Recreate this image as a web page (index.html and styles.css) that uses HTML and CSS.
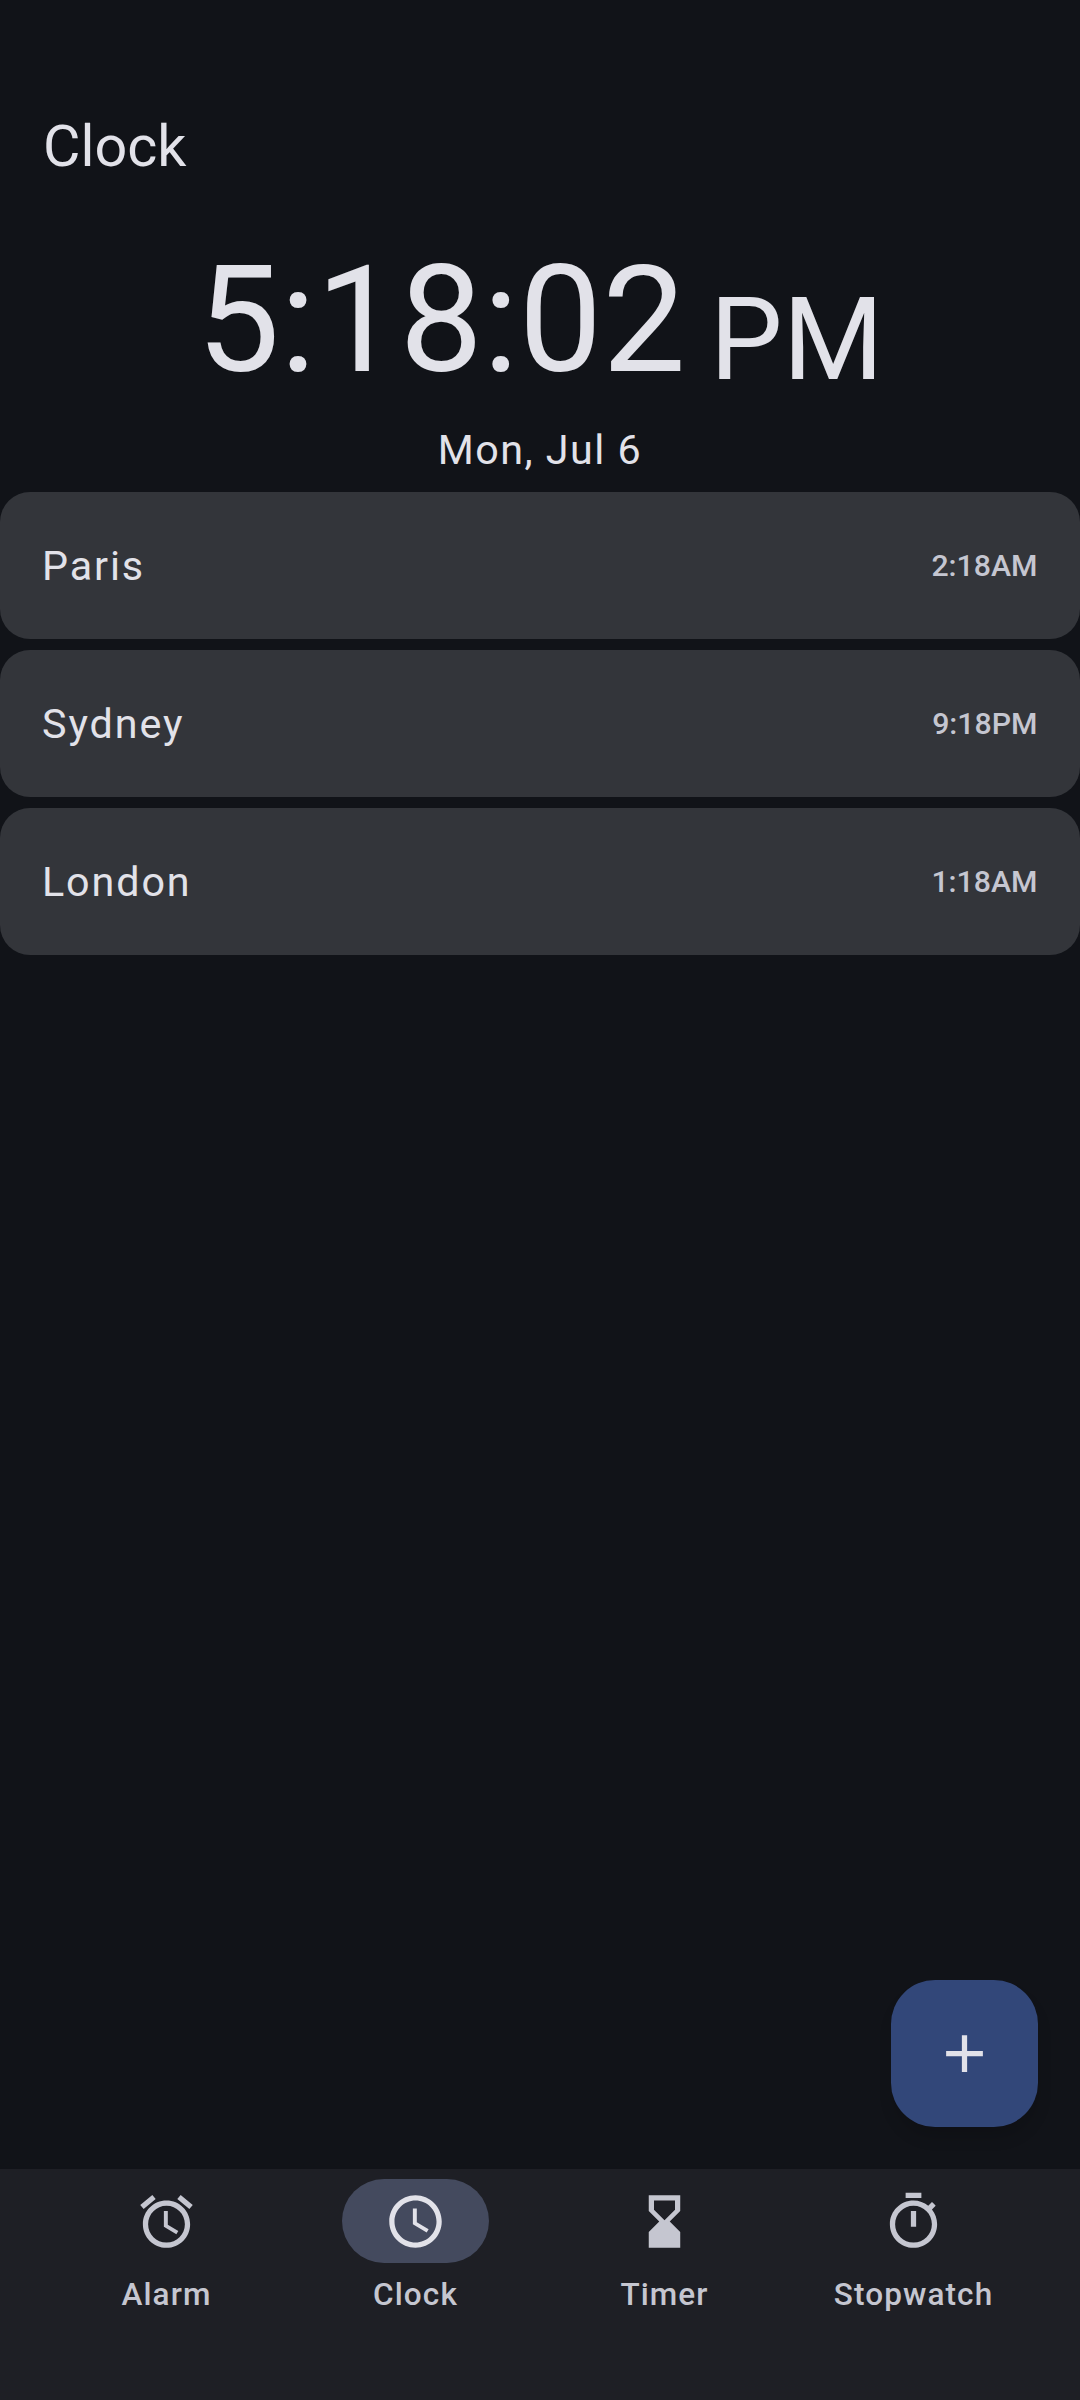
FILE: index.html
```html
<!DOCTYPE html>
<html lang="en">
<head>
<meta charset="utf-8">
<title>Clock</title>
<link rel="stylesheet" href="styles.css">
</head>
<body>
<div class="app">
  <main class="content">
    <h1 class="title">Clock</h1>
    <div class="now">
      <span class="now-time">5:18:02</span>
      <span class="now-ampm">PM</span>
    </div>
    <div class="date">Mon, Jul 6</div>
    <ul class="cities">
      <li class="city"><span class="city-name">Paris</span><span class="city-time">2:18AM</span></li>
      <li class="city"><span class="city-name">Sydney</span><span class="city-time">9:18PM</span></li>
      <li class="city"><span class="city-name">London</span><span class="city-time">1:18AM</span></li>
    </ul>
    <button class="fab" aria-label="Add">
      <svg class="icon" viewBox="0 0 24 24"><path d="M19 13h-6v6h-2v-6H5v-2h6V5h2v6h6v2z"/></svg>
    </button>
  </main>
  <nav class="nav">
    <div class="tab">
      <div class="pill"><svg class="icon" viewBox="0 0 24 24"><path d="M22 5.72l-4.6-3.86-1.29 1.53 4.6 3.86L22 5.72zM7.88 3.39L6.6 1.86 2 5.71l1.29 1.53 4.59-3.85zM12.5 8H11v6l4.75 2.85.75-1.23-4-2.37V8zM12 4c-4.97 0-9 4.03-9 9s4.03 9 9 9 9-4.03 9-9-4.03-9-9-9zm0 16c-3.87 0-7-3.13-7-7s3.13-7 7-7 7 3.13 7 7-3.13 7-7 7z"/></svg></div>
      <span class="tab-label">Alarm</span>
    </div>
    <div class="tab tab-active">
      <div class="pill"><svg class="icon" viewBox="0 0 24 24"><path d="M11.99 2C6.47 2 2 6.48 2 12s4.47 10 9.99 10C17.52 22 22 17.52 22 12S17.52 2 11.99 2zM12 20c-4.42 0-8-3.58-8-8s3.58-8 8-8 8 3.58 8 8-3.58 8-8 8zm.5-13H11v6l5.25 3.15.75-1.23-4.5-2.67z"/></svg></div>
      <span class="tab-label">Clock</span>
    </div>
    <div class="tab">
      <div class="pill"><svg class="icon" viewBox="0 0 24 24"><path d="M18 22l-.01-6L14 12l3.99-4.01L18 2H6v6l4 4-4 3.99V22h12zM8 7.5V4h8v3.5l-4 4-4-4z"/></svg></div>
      <span class="tab-label">Timer</span>
    </div>
    <div class="tab">
      <div class="pill"><svg class="icon" viewBox="0 0 24 24"><path d="M15 1H9v2h6V1zm-4 13h2V8h-2v6zm8.03-6.61l1.42-1.42c-.43-.51-.9-.99-1.41-1.41l-1.42 1.42C16.07 4.74 14.12 4 12 4c-4.97 0-9 4.03-9 9s4.02 9 9 9 9-4.03 9-9c0-2.12-.74-4.07-1.97-5.61zM12 20c-3.87 0-7-3.13-7-7s3.13-7 7-7 7 3.13 7 7-3.13 7-7 7z"/></svg></div>
      <span class="tab-label">Stopwatch</span>
    </div>
  </nav>
</div>
</body>
</html>
```

FILE: styles.css
```css
* { box-sizing: border-box; }
html, body { margin: 0; padding: 0; }
body {
  background: #111318;
  font-family: Roboto, "Liberation Sans", sans-serif;
  color: #e2e2e9;
}
.app {
  width: 1080px;
  height: 2400px;
  display: flex;
  flex-direction: column;
  overflow: hidden;
}
.content {
  position: relative;
  flex: 1;
  display: flex;
  flex-direction: column;
  padding-top: 111px;
}
.title {
  margin: 0;
  padding-left: 43px;
  font-size: 57.5px;
  line-height: 72px;
  font-weight: 400;
}
.now {
  margin-top: 48px;
  display: flex;
  justify-content: center;
  align-items: baseline;
  gap: 24px;
  height: 178px;
  line-height: 178px;
}
.now-time { font-size: 148.5px; font-weight: 400; }
.now-ampm { font-size: 115.5px; font-weight: 400; position: relative; top: 8px; }
.date {
  text-align: center;
  font-size: 41.25px;
  line-height: 56px;
  letter-spacing: 1.5px;
  margin-top: 13px;
}
.cities {
  list-style: none;
  margin: 14px 0 0;
  padding: 0;
  display: flex;
  flex-direction: column;
  gap: 11px;
}
.city {
  height: 147px;
  border-radius: 30px;
  background: #33353a;
  padding: 0 42.5px 0 42px;
  display: flex;
  align-items: center;
  justify-content: space-between;
}
.city-name { font-size: 41.25px; letter-spacing: 1.9px; }
.city-time { font-size: 30.25px; font-weight: 500; color: #c5c6d0; }
.fab {
  position: absolute;
  right: 42px;
  bottom: 42px;
  width: 147px;
  height: 147px;
  border: 0;
  padding: 0;
  border-radius: 44px;
  background: #324779;
  color: #e2e2e9;
  display: flex;
  align-items: center;
  justify-content: center;
  box-shadow: 1px 12px 16px -2px rgba(0, 0, 0, 0.14);
}
.icon { width: 63px; height: 63px; fill: currentColor; display: block; }
.nav {
  height: 231px;
  flex: none;
  background: #1e1f25;
  padding: 10px 42px 0;
  display: grid;
  grid-template-columns: repeat(4, 1fr);
  color: #c5c6d0;
}
.tab {
  display: flex;
  flex-direction: column;
  align-items: center;
}
.pill {
  width: 147px;
  height: 84px;
  border-radius: 42px;
  display: flex;
  align-items: center;
  justify-content: center;
}
.tab-active .pill { background: #444a5e; color: #e2e2e9; }
.tab-label {
  margin-top: 10px;
  font-size: 31.5px;
  line-height: 44px;
  font-weight: 500;
  letter-spacing: 1.1px;
}
```
